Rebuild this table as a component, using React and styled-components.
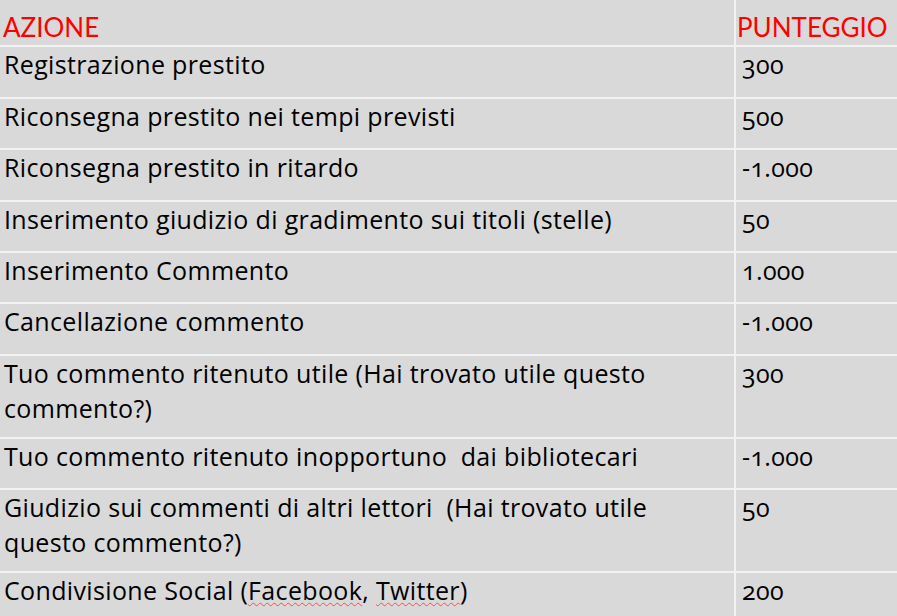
import React from 'react';
import styled, { createGlobalStyle } from 'styled-components';

const GlobalStyle = createGlobalStyle`
html, body {
  margin: 0;
  padding: 0;
  background: #d9d9d9;
}
body {
  font-family: "Open Sans", Lato, sans-serif;
  color: #000;
}
`;

const Table = styled.div`
width: 897px;
height: 616px;
overflow: hidden;
background: #d9d9d9;
`;

const Row = styled.div`
display: grid;
grid-template-columns: 734px 1fr;
height: ${p => p.$height}px;
border-top: ${p => (p.$header ? 'none' : '2px solid #f2f2f2')};
box-sizing: border-box;
`;

const Cell = styled.div`
padding-top: ${p => (p.$header ? 10 : 0)}px;
padding-left: ${p => p.$pad}px;
font-family: ${p => (p.$header ? 'Lato, "Open Sans", sans-serif' : '"Open Sans", Lato, sans-serif')};
font-size: ${p => (p.$header ? 26 : 25)}px;
letter-spacing: ${p => (p.$header ? 0 : 0.35)}px;
line-height: 35px;
color: ${p => (p.$header ? '#ff0000' : '#000')};
white-space: pre;
font-variant-ligatures: none;
font-variant-numeric: oldstyle-nums;
border-left: ${p => (p.$second ? '2px solid #f2f2f2' : 'none')};
`;

const Spell = styled.span`
text-decoration: underline wavy #ff4a4a;
text-decoration-thickness: 1px;
text-underline-offset: 2px;
`;

const rows = [
  { action: 'Registrazione prestito', points: '300' },
  { action: 'Riconsegna prestito nei tempi previsti', points: '500' },
  { action: 'Riconsegna prestito in ritardo', points: '-1.000' },
  { action: 'Inserimento giudizio di gradimento sui titoli (stelle)', points: '50' },
  { action: 'Inserimento Commento', points: '1.000' },
  { action: 'Cancellazione commento', points: '-1.000' },
  { action: 'Tuo commento ritenuto utile (Hai trovato utile questo\ncommento?)', points: '300' },
  { action: 'Tuo commento ritenuto inopportuno  dai bibliotecari', points: '-1.000' },
  { action: 'Giudizio sui commenti di altri lettori  (Hai trovato utile\nquesto commento?)', points: '50' },
  {
    action: (
      <>
        Condivisione Social (<Spell>Facebook</Spell>, <Spell>Twitter</Spell>)
      </>
    ),
    points: '200',
  },
];

const heights = [52, 51, 51.5, 51.5, 51, 51.5, 83, 51, 83, 51];

const App = () => {
  return (
    <>
      <GlobalStyle />
      <Table>
        <Row $header $height={45}>
          <Cell $header $pad={3}>AZIONE</Cell>
          <Cell $header $second $pad={1}>PUNTEGGIO</Cell>
        </Row>
        {rows.map((item, index) => (
          <Row key={index} $height={heights[index]}>
            <Cell $pad={4}>{item.action}</Cell>
            <Cell $second $pad={6}>{item.points}</Cell>
          </Row>
        ))}
      </Table>
    </>
  );
};

export default App;
